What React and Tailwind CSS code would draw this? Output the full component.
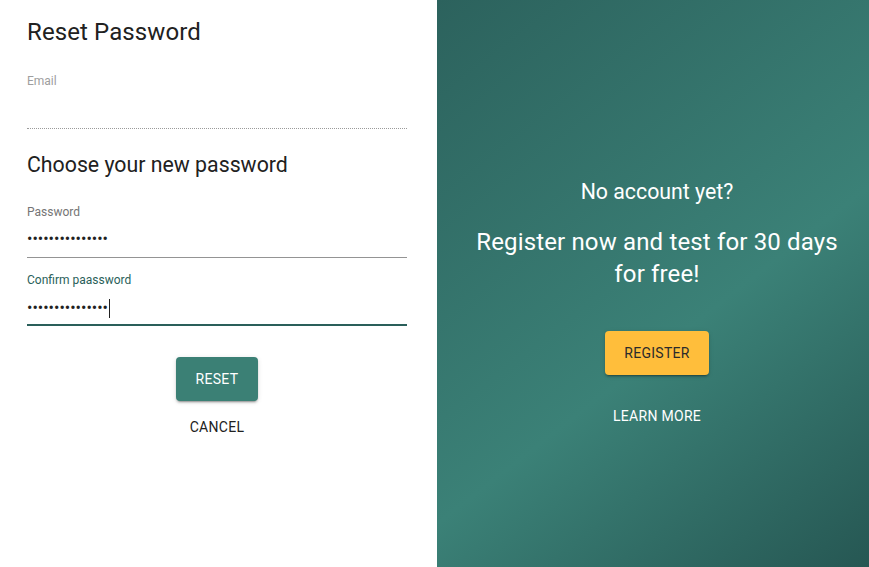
export default function App() {
  const font = { fontFamily: 'Roboto, "Liberation Sans", sans-serif' };
  const shadow =
    "shadow-[0_3px_1px_-2px_rgba(0,0,0,0.2),0_2px_2px_0_rgba(0,0,0,0.14),0_1px_5px_0_rgba(0,0,0,0.12)]";
  return (
    <div className="flex w-[869px] h-[567px] overflow-hidden bg-white" style={font}>
      <div className="w-[437px] h-full pl-[27px] pr-[30px] pt-4 flex flex-col">
        <h1 className="text-[24px] leading-[32px] text-[#212121] font-normal tracking-[0.1px]">Reset Password</h1>

        <div className="mt-[25px] flex flex-col border-b border-dotted border-[#9a9a9a]">
          <label className="text-[12px] leading-[16px] text-[#9e9e9e]">Email</label>
          <div className="h-[24px] mt-[7px] mb-[8px]"></div>
        </div>

        <h2 className="mt-[22px] text-[21.3px] leading-[28px] text-[#212121] font-normal">Choose your new password</h2>

        <div className="mt-[25px] flex flex-col border-b border-[#949494]">
          <label className="text-[12px] leading-[16px] text-[#757575]">Password</label>
          <div className="h-[24px] mt-[7px] mb-[6px] flex items-center text-[16px] text-[#212121]">
            •••••••••••••••
          </div>
        </div>

        <div className="mt-[14px] flex flex-col border-b-2 border-[#2a5f5a]">
          <label className="text-[12px] leading-[16px] text-[#2a5f5a]">Confirm paassword</label>
          <div className="h-[24px] mt-[8px] mb-[4px] flex items-center text-[16px] text-[#212121]">
            <span>•••••••••••••••</span>
            <span className="w-px h-[19px] bg-[#212121] ml-px"></span>
          </div>
        </div>

        <div className="mt-[31px] flex flex-col items-center">
          <button className={`h-[44px] w-[82px] rounded bg-[#3b8075] text-white text-[14px] font-normal tracking-[0.3px] ${shadow}`}>
            RESET
          </button>
          <button className="mt-[16px] text-[14px] leading-[20px] font-normal text-[#212121] tracking-[0.3px]">
            CANCEL
          </button>
        </div>
      </div>

      <div className="flex-1 h-full bg-[linear-gradient(142deg,#2c625d_0%,#3b8177_58%,#265753_100%)] flex flex-col items-center pl-[32px] pr-[24px] pt-[178px] text-white text-center">
        <p className="text-[21.3px] leading-[28px]">No account yet?</p>
        <p className="mt-[20px] text-[24px] leading-[32px] tracking-[0.15px]">Register now and test for 30 days for free!</p>
        <button className={`mt-[41px] h-[44px] w-[104px] rounded bg-[#ffbe3b] text-[#2b2b2b] text-[14px] font-normal tracking-[0.3px] ${shadow}`}>
          REGISTER
        </button>
        <button className="mt-[31px] text-[14px] leading-[20px] font-normal tracking-[0.3px] text-white">
          LEARN MORE
        </button>
      </div>
    </div>
  );
}
